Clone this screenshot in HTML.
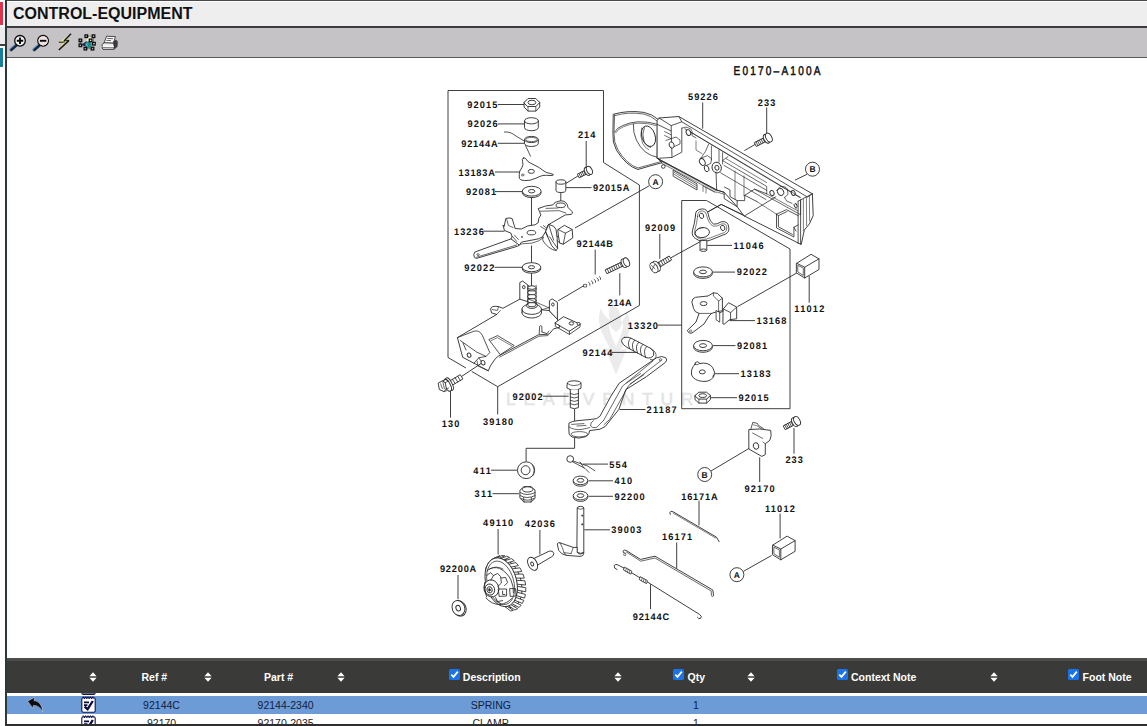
<!DOCTYPE html>
<html>
<head>
<meta charset="utf-8">
<title>CONTROL-EQUIPMENT</title>
<style>
html,body{margin:0;padding:0;background:#fff;}
body{width:1147px;height:726px;position:relative;overflow:hidden;font-family:"Liberation Sans",sans-serif;}
.abs{position:absolute;}
#topline{left:5px;top:0;width:1142px;height:1px;background:#4a4a4a;}
#vline{left:5px;top:0;width:2px;height:726px;background:#2e3838;}
#redblk{left:0;top:2px;width:3px;height:23px;background:#e0344a;}
#leftgray{left:0;top:27px;width:5px;height:17px;background:#ececec;}
#lefthl{left:0;top:44px;width:5px;height:2px;background:#3a4242;}
#tealblk{left:0;top:48px;width:3px;height:19px;background:#1a7f96;}
#hdr{left:7px;top:2px;width:1140px;height:24px;background:#eeeeee;}
#hdr span{position:absolute;left:6px;top:2px;font-size:16px;font-weight:bold;color:#111;white-space:nowrap;line-height:20px;}
#hdrline{left:7px;top:26px;width:1140px;height:2px;background:#3c3c3c;}
#tbar{left:7px;top:28px;width:1140px;height:29px;background:#c5c3c5;}
#tbarline{left:7px;top:57px;width:1140px;height:1px;background:#5a5a5a;}
#thead{left:7px;top:658px;width:1140px;height:35px;background:#3a3b39;}
#theadtop{left:7px;top:658px;width:1140px;height:3px;background:#4c4d4b;}
#rowsel{left:7px;top:696px;width:1140px;height:18px;background:#6c9bd6;}
#botline{left:5px;top:724px;width:1142px;height:2px;background:#2e2e2e;}
.th{position:absolute;top:670px;font-size:10.5px;font-weight:bold;color:#fff;white-space:nowrap;line-height:14px;}
.td{position:absolute;font-size:10.5px;color:#10213f;white-space:nowrap;line-height:14px;transform:translateX(-50%);}
.cb{position:absolute;top:669px;width:11px;height:11px;background:#1a73e8;border-radius:1.5px;}
.sort{position:absolute;top:672px;width:8px;height:10px;}
#dgm{left:0;top:0;}
#dgm text{font-family:"Liberation Sans",sans-serif;font-weight:bold;font-size:9.5px;fill:#111;letter-spacing:0.9px;text-rendering:geometricPrecision;}
</style>
</head>
<body>
<div class="abs" id="topline"></div>
<div class="abs" id="redblk"></div>
<div class="abs" id="leftgray"></div>
<div class="abs" id="lefthl"></div>
<div class="abs" id="tealblk"></div>
<div class="abs" id="hdr"><span>CONTROL-EQUIPMENT</span></div>
<div class="abs" id="hdrline"></div>
<div class="abs" id="tbar"></div>
<div class="abs" id="tbarline"></div>
<svg class="abs" style="left:0;top:0" width="140" height="60" viewBox="0 0 140 60"><g><path d="M15.8 45.2L10.8 49.6" stroke="#7fa0c8" stroke-width="3.6" stroke-linecap="round"/><path d="M16.2 45.6L11.4 49.9" stroke="#16263e" stroke-width="2.6" stroke-linecap="round"/><circle cx="20" cy="40.8" r="5.3" fill="#f4f4f4" stroke="#0a0a0a" stroke-width="1.3"/><path d="M16.8 40.8h6.4M20 37.6v6.4" stroke="#0a0a0a" stroke-width="1.9"/></g><g><path d="M38.9 45.2L33.900000000000006 49.6" stroke="#7fa0c8" stroke-width="3.6" stroke-linecap="round"/><path d="M39.300000000000004 45.6L34.5 49.9" stroke="#16263e" stroke-width="2.6" stroke-linecap="round"/><circle cx="43.1" cy="40.8" r="5.3" fill="#f4f4f4" stroke="#0a0a0a" stroke-width="1.3"/><circle cx="43.1" cy="40.8" r="4.6" fill="#efe2e2"/><path d="M39.9 40.8h6.4" stroke="#0a0a0a" stroke-width="1.9"/></g><path d="M70.4 34.2L58.6 42.2L63.6 42.3L58.4 50.2L68.4 41.2L64 40.8Z" fill="#ece58a"/><path d="M71 33.8L64 40.9" fill="none" stroke="#15150a" stroke-width="1.4"/><path d="M69 40.4L58.8 50" fill="none" stroke="#15150a" stroke-width="1.5"/><path d="M58.8 42.3L64.6 42" fill="none" stroke="#15150a" stroke-width="1.1"/><path d="M64 40.9L69 40.4" fill="none" stroke="#15150a" stroke-width="0.9"/><rect x="86.6" y="36.6" width="4.6" height="4.8" fill="#f2eec0"/><path d="M81 45L86.5 41L87.5 47Z" fill="#1c2a66"/><circle cx="88.4" cy="44.8" r="3.3" fill="#1f8a84"/><path d="M87 43.4a2 2 0 0 0 1 3" stroke="#8fd0c8" stroke-width="0.9" fill="none"/><rect x="85.0" y="34.9" width="2.6" height="2.6" fill="#e8e8e8" stroke="#0a0a0a" stroke-width="1.25"/><rect x="92.2" y="34.9" width="2.6" height="2.6" fill="#e8e8e8" stroke="#0a0a0a" stroke-width="1.25"/><rect x="79.1" y="39.1" width="2.6" height="2.6" fill="#e8e8e8" stroke="#0a0a0a" stroke-width="1.25"/><rect x="89.3" y="39.1" width="2.6" height="2.6" fill="#e8e8e8" stroke="#0a0a0a" stroke-width="1.25"/><rect x="79.1" y="44.0" width="2.6" height="2.6" fill="#e8e8e8" stroke="#0a0a0a" stroke-width="1.25"/><rect x="92.6" y="42.4" width="2.6" height="2.6" fill="#e8e8e8" stroke="#0a0a0a" stroke-width="1.25"/><rect x="84.1" y="47.3" width="2.6" height="2.6" fill="#e8e8e8" stroke="#0a0a0a" stroke-width="1.25"/><rect x="91.2" y="47.3" width="2.6" height="2.6" fill="#e8e8e8" stroke="#0a0a0a" stroke-width="1.25"/><path d="M86.3 36.2H93.5M80.4 40.4V45.3M85.4 48.6H92.5M93.5 37.5V42.5" stroke="#0a0a0a" stroke-width="0.7" stroke-dasharray="1 1"/><path d="M106.6 36.2L115.4 36.6L113.4 43.2L104 43Z" fill="#fafafa" stroke="#222" stroke-width="0.8"/><path d="M107.2 38.4L113 38.7M106.4 40.4L111 40.6" stroke="#444" stroke-width="0.8"/><path d="M113.4 41.6L116 39.6L117.8 41.4L117.6 46.6L114.4 49.6L113.4 45Z" fill="#3c3c3c"/><path d="M102.2 44.4L104.2 42.8L113.6 43.2L114 45.4L114 49.4L103 49.4L102.2 47.4Z" fill="#ededed" stroke="#222" stroke-width="0.8"/><path d="M102.6 46.2L113.8 46.4" stroke="#fff" stroke-width="1"/><path d="M102.6 47.6L113.8 47.8" stroke="#555" stroke-width="0.8"/></svg>
<svg class="abs" id="dgm" width="1147" height="726" viewBox="0 0 1147 726">
<g><text x="506" y="404.6" textLength="194.5" style="font-size:17.5px;font-weight:normal;fill:#e4e4e4;stroke:#e4e4e4;stroke-width:0.5px;letter-spacing:7px">LEADVENTUR</text><path d="M612 303 Q607 311 610 320 Q603 316 601 308 Q596 321 603 335 L611 350 L605 348 L616 375 L627 348 L621 350 L628 335 Q633 322 626 311 Q626 319 621 322 Q622 311 612 303 Z M609 322 Q608 330 616 346 Q624 330 623 322 Q620 330 616 332 Q612 330 609 322 Z" fill="#ebebeb" fill-rule="evenodd"/></g>
<text transform="translate(733.5 74.8) scale(0.8 1)" x="0" y="0" textLength="110.7" style="font-size:12.6px;font-weight:normal;stroke:#111;stroke-width:0.5px;letter-spacing:2px">E0170–A100A</text>
<text transform="translate(467.3 108.0) scale(0.97 1)" x="0" y="0" textLength="31.9">92015</text>
<text transform="translate(467.5 127.4) scale(0.97 1)" x="0" y="0" textLength="31.9">92026</text>
<text transform="translate(461.2 146.8) scale(0.97 1)" x="0" y="0" textLength="38.4">92144A</text>
<text transform="translate(458.5 175.6) scale(0.97 1)" x="0" y="0" textLength="38.4">13183A</text>
<text transform="translate(466 195.3) scale(0.97 1)" x="0" y="0" textLength="31.9">92081</text>
<text transform="translate(577.9 138.1) scale(0.97 1)" x="0" y="0" textLength="19.0">214</text>
<text transform="translate(593 191.1) scale(0.97 1)" x="0" y="0" textLength="38.4">92015A</text>
<text transform="translate(453.9 234.7) scale(0.97 1)" x="0" y="0" textLength="31.9">13236</text>
<text transform="translate(576.6 246.7) scale(0.97 1)" x="0" y="0" textLength="38.4">92144B</text>
<text transform="translate(464.2 270.7) scale(0.97 1)" x="0" y="0" textLength="31.9">92022</text>
<text transform="translate(607.7 305.9) scale(0.97 1)" x="0" y="0" textLength="25.5">214A</text>
<text transform="translate(582.4 355.9) scale(0.97 1)" x="0" y="0" textLength="31.9">92144</text>
<text transform="translate(512.6 399.7) scale(0.97 1)" x="0" y="0" textLength="31.9">92002</text>
<text transform="translate(483.1 424.5) scale(0.97 1)" x="0" y="0" textLength="31.9">39180</text>
<text transform="translate(441.8 427.1) scale(0.97 1)" x="0" y="0" textLength="19.0">130</text>
<text transform="translate(687.9 100.3) scale(0.97 1)" x="0" y="0" textLength="31.9">59226</text>
<text transform="translate(757.8 106.1) scale(0.97 1)" x="0" y="0" textLength="19.0">233</text>
<text transform="translate(645 231.4) scale(0.97 1)" x="0" y="0" textLength="31.9">92009</text>
<text transform="translate(733.5 248.9) scale(0.97 1)" x="0" y="0" textLength="31.9">11046</text>
<text transform="translate(736.7 275.2) scale(0.97 1)" x="0" y="0" textLength="31.9">92022</text>
<text transform="translate(794.3 312.4) scale(0.97 1)" x="0" y="0" textLength="31.9">11012</text>
<text transform="translate(756.4 324.1) scale(0.97 1)" x="0" y="0" textLength="31.9">13168</text>
<text transform="translate(627.7 328.6) scale(0.97 1)" x="0" y="0" textLength="31.9">13320</text>
<text transform="translate(737 349.1) scale(0.97 1)" x="0" y="0" textLength="31.9">92081</text>
<text transform="translate(740.6 377.2) scale(0.97 1)" x="0" y="0" textLength="31.9">13183</text>
<text transform="translate(738.5 401.2) scale(0.97 1)" x="0" y="0" textLength="31.9">92015</text>
<text transform="translate(646.6 413.0) scale(0.97 1)" x="0" y="0" textLength="31.9">21187</text>
<text transform="translate(785.4 463.1) scale(0.97 1)" x="0" y="0" textLength="19.0">233</text>
<text transform="translate(744.5 492.4) scale(0.97 1)" x="0" y="0" textLength="31.9">92170</text>
<text transform="translate(681.2 499.7) scale(0.97 1)" x="0" y="0" textLength="38.4">16171A</text>
<text transform="translate(764.9 512.0) scale(0.97 1)" x="0" y="0" textLength="31.9">11012</text>
<text transform="translate(473.2 473.7) scale(0.97 1)" x="0" y="0" textLength="19.0">411</text>
<text transform="translate(609.3 467.6) scale(0.97 1)" x="0" y="0" textLength="19.0">554</text>
<text transform="translate(614.6 484.1) scale(0.97 1)" x="0" y="0" textLength="19.0">410</text>
<text transform="translate(474.5 497.0) scale(0.97 1)" x="0" y="0" textLength="19.0">311</text>
<text transform="translate(614.6 499.8) scale(0.97 1)" x="0" y="0" textLength="31.9">92200</text>
<text transform="translate(483.1 526.0) scale(0.97 1)" x="0" y="0" textLength="31.9">49110</text>
<text transform="translate(524.8 527.1) scale(0.97 1)" x="0" y="0" textLength="31.9">42036</text>
<text transform="translate(611.2 533.3) scale(0.97 1)" x="0" y="0" textLength="31.9">39003</text>
<text transform="translate(662 539.9) scale(0.97 1)" x="0" y="0" textLength="31.9">16171</text>
<text transform="translate(439.9 572.1) scale(0.97 1)" x="0" y="0" textLength="38.4">92200A</text>
<text transform="translate(632.7 620.0) scale(0.97 1)" x="0" y="0" textLength="38.4">92144C</text>
<path d="M448 90.5 L603.5 90.5 L603.5 162.5 L639.4 185 L639.4 305.5 L497.7 386.7 M448 90.5 L448 357.5 L466 368 M471.7 371.4 L497.7 386.7 L497.7 414.5 M681.7 200.5 L706.5 200.5 L790 249 L790 408.7 L681.7 408.7 L681.7 200.5 M497.8 104.5 L524.5 104.5 M497.8 123.9 L524.5 123.9 M497.8 143.3 L537.5 143.3 M495 172 L520.3 172 M495 191.6 L522.5 191.6 M586.2 141 L586.2 167.5 M566 187.6 L591.5 187.6 M483.2 231.2 L504.5 231.2 M595.2 249.6 L595.2 274.5 M494.5 267.3 L522.3 267.3 M619.8 273.2 L619.8 295.4 M612 352.4 L636 352.4 M543 396.2 L568.6 396.2 M450.5 391 L450.5 417.7 M702.7 102.5 L702.7 128.6 M766.7 107.5 L766.7 133 M659.8 234 L659.8 258.8 M707.2 245.4 L732 245.4 M713 272.1 L735 272.1 M809.2 276 L809.2 302.7 M729.5 320.6 L755 320.6 M657.5 325.1 L681.7 325.1 M713 345.6 L735.5 345.6 M714.5 373.7 L739 373.7 M710.7 397.7 L737 397.7 M619.7 409.5 L645.5 409.5 M794 428 L794 453.7 M759.7 457.3 L759.7 482 M699 500.6 L699 525.4 M780.1 513.7 L780.1 538.5 M491 470.2 L517.5 470.2 M583 464.1 L608 464.1 M588.5 480.8 L613 480.8 M492.5 493.7 L519 493.7 M588.5 496.3 L613 496.3 M498.1 529 L498.1 554.5 M539.9 530 L539.9 554.5 M584.3 529.8 L610 529.8 M676.7 542.5 L676.7 568.6 M458 575 L458 599.2 M650.5 584.3 L650.5 609.2 M531.5 197 L531.5 229 M531.5 245.6 L531.5 262.6 M531.5 272 L531.5 288 M560.8 192 L560.8 202.4 M649.2 185.8 L575 228 M558.2 300.8 L584 285.6 M461.5 376.5 L481.5 363.2 M574.6 409 L574.6 421.4 M574.6 437.8 L574.6 448.3 L526.1 448.3 L526.1 461.5 M670.5 258 L700.5 241.5 M796.7 273 L737.6 306.6 M749.2 448.3 L711 471 M743.5 571.3 L771.5 555.5 M807 174.3 L795 180.1 M755 144.5 L744.4 150.6 M577.9 176 L565.8 183.5 M775.8 196.8 L744.7 215.8 L721.2 204.4 L707.6 212" fill="none" stroke="#2a2a2a" stroke-width="0.9"/>
<circle cx="655.6" cy="181.7" r="7" fill="#fff" stroke="#2a2a2a" stroke-width="0.9"/>
<text x="652.5" y="184.89999999999998" style="font-size:8.5px;letter-spacing:0">A</text>
<circle cx="812.5" cy="169.2" r="7" fill="#fff" stroke="#2a2a2a" stroke-width="0.9"/>
<text x="809.4" y="172.39999999999998" style="font-size:8.5px;letter-spacing:0">B</text>
<circle cx="704.7" cy="474.5" r="7" fill="#fff" stroke="#2a2a2a" stroke-width="0.9"/>
<text x="701.6" y="477.7" style="font-size:8.5px;letter-spacing:0">B</text>
<circle cx="736.9" cy="574.7" r="7" fill="#fff" stroke="#2a2a2a" stroke-width="0.9"/>
<text x="733.8" y="577.9000000000001" style="font-size:8.5px;letter-spacing:0">A</text>
<path d="M524.1 102.5 L524.1 107.1 L528.0 111.1 L535.8 111.1 L539.7 107.1 L539.7 102.5 Z" fill="#fff" stroke="#2a2a2a" stroke-width="0.9" stroke-linejoin="round" stroke-linecap="round" />
<path d="M524.1 102.5 L528.0 98.5 L535.8 98.5 L539.7 102.5 L535.8 106.5 L528.0 106.5 Z" fill="#fff" stroke="#2a2a2a" stroke-width="0.9" stroke-linejoin="round" stroke-linecap="round" />
<path d="M528.0 106.5V111.1M535.8 106.5V111.1" fill="none" stroke="#2a2a2a" stroke-width="0.7" stroke-linejoin="round" stroke-linecap="round" />
<ellipse cx="531.9" cy="102.5" rx="3.9" ry="2.2680000000000002" transform="rotate(0 531.9 102.5)" fill="#fff" stroke="#2a2a2a" stroke-width="0.9"/>
<path d="M524.5 120.8V127.6A6.9 3.1 0 0 0 538.3 127.6V120.8" fill="#fff" stroke="#2a2a2a" stroke-width="0.9" stroke-linejoin="round" stroke-linecap="round" />
<ellipse cx="531.4" cy="120.8" rx="6.9" ry="3.1" transform="rotate(0 531.4 120.8)" fill="#fff" stroke="#2a2a2a" stroke-width="0.9"/>
<path d="M504.4 132 C509 131.5 512 133 516 136 L525 141.5" fill="none" stroke="#2a2a2a" stroke-width="0.8" stroke-linejoin="round" stroke-linecap="round" />
<path d="M524.5 139.5V143.4A6.9 3.1 0 0 0 538.3 143.4V139.5" fill="#fff" stroke="#2a2a2a" stroke-width="0.9" stroke-linejoin="round" stroke-linecap="round" />
<ellipse cx="531.4" cy="139.5" rx="6.9" ry="3.1" transform="rotate(0 531.4 139.5)" fill="#fff" stroke="#2a2a2a" stroke-width="0.9"/>
<ellipse cx="531.4" cy="139.5" rx="5.6" ry="2.1" transform="rotate(0 531.4 139.5)" fill="none" stroke="#2a2a2a" stroke-width="0.7"/>
<path d="M525.6 145.6 L530.5 156.2" fill="none" stroke="#2a2a2a" stroke-width="0.8" stroke-linejoin="round" stroke-linecap="round" />
<path d="M523.7 157.9 Q525.4 157.6 525.9 158.9 Q527 161.4 530.3 163 L538.9 167.4 Q543 170.6 546.2 172.4 Q550 173.4 553.4 174.4 Q553.6 175.6 551 175.6 Q546 175 542.6 175.5 Q539 176.6 536 178.2 Q530 181 524.5 180.6 Q520 180.4 519.3 178.2 Q519 174 519.8 171 Q522.4 167.6 523 164.5 Q522.4 161 522.3 159.4 Q522.6 158 523.7 157.9 Z" fill="#fff" stroke="#2a2a2a" stroke-width="0.9" stroke-linejoin="round" stroke-linecap="round" />
<ellipse cx="531.3" cy="171.4" rx="3.1" ry="2.0" transform="rotate(0 531.3 171.4)" fill="#fff" stroke="#2a2a2a" stroke-width="0.9"/>
<ellipse cx="522.8" cy="175" rx="1.4" ry="0.9" transform="rotate(0 522.8 175)" fill="none" stroke="#2a2a2a" stroke-width="0.7"/>
<ellipse cx="531.7" cy="192.7" rx="9.4" ry="4.9" transform="rotate(0 531.7 192.7)" fill="#fff" stroke="#2a2a2a" stroke-width="0.9"/>
<ellipse cx="531.7" cy="191.2" rx="9.4" ry="4.9" transform="rotate(0 531.7 191.2)" fill="#fff" stroke="#2a2a2a" stroke-width="0.9"/>
<ellipse cx="531.7" cy="191.2" rx="3.2" ry="1.7" transform="rotate(0 531.7 191.2)" fill="#fff" stroke="#2a2a2a" stroke-width="0.9"/>
<path d="M585.2 170.2 L577.3 174.2 L579.1 177.8 L587.0 173.8 Z" fill="#fff" stroke="#2a2a2a" stroke-width="0.9" stroke-linejoin="round" stroke-linecap="round" />
<path d="M583.7 171.0L585.4 174.6M582.1 171.8L583.9 175.4M580.5 172.6L582.3 176.2M578.9 173.4L580.7 177.0" fill="none" stroke="#2a2a2a" stroke-width="0.8" stroke-linejoin="round" stroke-linecap="round" />
<ellipse cx="587.2826997932801" cy="171.45865010335993" rx="2.4200000000000004" ry="4.4" transform="rotate(153.4349488229219 587.2826997932801 171.45865010335993)" fill="#fff" stroke="#2a2a2a" stroke-width="0.9"/>
<ellipse cx="589.4472135955" cy="170.37639320225003" rx="2.64" ry="4.4" transform="rotate(153.4349488229219 589.4472135955 170.37639320225003)" fill="#fff" stroke="#2a2a2a" stroke-width="0.9"/>
<path d="M556.0 182V190.3A4.9 2.2 0 0 0 565.8 190.3V182" fill="#fff" stroke="#2a2a2a" stroke-width="0.9" stroke-linejoin="round" stroke-linecap="round" />
<ellipse cx="560.9" cy="182" rx="4.9" ry="2.2" transform="rotate(0 560.9 182)" fill="#fff" stroke="#2a2a2a" stroke-width="0.9"/>
<path d="M511.0 238.9 L474.9 252.0 L473.7 254.8 L474.6 257.6 L476.5 258.4 L517.3 246.3 L519.4 245.2 L521.0 241.0 Z" fill="#fff" stroke="#2a2a2a" stroke-width="0.9" stroke-linejoin="round" stroke-linecap="round" />
<path d="M476.6 257.2 L516.6 245" fill="none" stroke="#2a2a2a" stroke-width="0.7" stroke-linejoin="round" stroke-linecap="round" />
<ellipse cx="478.1" cy="254.6" rx="1.2" ry="0.9" transform="rotate(0 478.1 254.6)" fill="#fff" stroke="#2a2a2a" stroke-width="0.7"/>
<path d="M503.2 225.3 L504.2 226.4 L505.8 218.5 Q509 217.4 512.1 218.5 L514.2 225.3 L515.2 228.5 L521.5 229 L527.8 225.9 L535.1 224.8 L538.2 222.7 L538.8 218.5 L540.9 214.9 L538.2 208.6 L545.6 206 L552.9 204.9 Q554.4 201.6 561.3 200.8 Q567 201 568.1 207.6 L572.2 211.7 Q573 213.8 571.2 214.4 L565.4 214.9 L551.8 222.7 L547.7 225.3 L545.6 231.6 L542.4 236.9 L538.2 238.9 L521.5 242.1 L519.4 245.2 L511 238.9 L512.1 236.9 L511 233.2 L504.8 230.6 Z" fill="#fff" stroke="#2a2a2a" stroke-width="0.9" stroke-linejoin="round" stroke-linecap="round" />
<ellipse cx="560.7" cy="205.3" rx="4.7" ry="2.3" transform="rotate(0 560.7 205.3)" fill="#fff" stroke="#2a2a2a" stroke-width="0.9"/>
<ellipse cx="531.4" cy="232.7" rx="4.3" ry="2.2" transform="rotate(0 531.4 232.7)" fill="#fff" stroke="#2a2a2a" stroke-width="0.9"/>
<ellipse cx="522" cy="236.9" rx="0.7" ry="0.5" transform="rotate(0 522 236.9)" fill="#2a2a2a" stroke="#2a2a2a" stroke-width="0.5"/>
<path d="M540.3 211.2 L559.2 210.7 L566 213 M546 208.4 L558 208 M540.6 226.6 L545.4 229.4 M543.4 225.6 L546 227.6 M506.8 219.6 L508.4 225.4 L513.2 227.6 M512.4 236.2 L516.6 241.4 M514.6 235.2 L518.4 239.6" fill="none" stroke="#2a2a2a" stroke-width="0.7" stroke-linejoin="round" stroke-linecap="round" />
<path d="M520.6 244.2 L522.6 243.8 L532 243.1 L538.8 240.8 L543.6 237.4" fill="none" stroke="#2a2a2a" stroke-width="0.7" stroke-linejoin="round" stroke-linecap="round" />
<path d="M545.6 231.6 L548.7 224.3 L553.9 226.4 L556.0 229.5 L557.1 236.9 L557.6 248.4 L556.0 250.5 L552.0 246.0 Z" fill="#fff" stroke="#2a2a2a" stroke-width="0.9" stroke-linejoin="round" stroke-linecap="round" />
<path d="M542.9 236.9 Q541.6 240 544.5 243 Q548 247.6 552.6 249.6 L556 250.5 M549.7 236.9 Q553 242 557.6 248.4 M548.7 224.3 L551 232 L553.6 240 M545.6 231.6 L548 236.6" fill="none" stroke="#2a2a2a" stroke-width="0.8" stroke-linejoin="round" stroke-linecap="round" />
<path d="M558.1 229.5 L564.4 225.3 L572.2 229.5 L572.8 237.9 L563.3 244.2 L559.7 243.1 L558.6 236.9 Z" fill="#fff" stroke="#2a2a2a" stroke-width="0.9" stroke-linejoin="round" stroke-linecap="round" />
<path d="M558.1 229.5 L565.4 233.2 L572.2 229.5 M565.4 233.2 L563.3 244.2 M556.6 236 L558.6 236.9 M557.4 240.6 L559.7 243.1" fill="none" stroke="#2a2a2a" stroke-width="0.8" stroke-linejoin="round" stroke-linecap="round" />
<ellipse cx="531.5" cy="268.7" rx="9.3" ry="4.5" transform="rotate(0 531.5 268.7)" fill="#fff" stroke="#2a2a2a" stroke-width="0.9"/>
<ellipse cx="531.5" cy="267.2" rx="9.3" ry="4.5" transform="rotate(0 531.5 267.2)" fill="#fff" stroke="#2a2a2a" stroke-width="0.9"/>
<ellipse cx="531.5" cy="267.2" rx="3.1" ry="1.6" transform="rotate(0 531.5 267.2)" fill="#fff" stroke="#2a2a2a" stroke-width="0.9"/>
<path d="M584 284.4 h2.6 v2.6 h-2.6 Z" fill="#fff" stroke="#2a2a2a" stroke-width="0.7" stroke-linejoin="round" stroke-linecap="round" />
<path d="M588.6 282.2 q2.2 1 1.4 3 M591.4 280.8 q2.2 1 1.4 3 M594.2 279.4 q2.2 1 1.4 3 M597 278 q2.2 1 1.4 3 M599.4 276.6 q2 1 1.2 2.8" fill="none" stroke="#2a2a2a" stroke-width="0.8" stroke-linejoin="round" stroke-linecap="round" />
<path d="M622.0 261.9 L605.1 269.9 L606.9 273.7 L623.8 265.7 Z" fill="#fff" stroke="#2a2a2a" stroke-width="0.9" stroke-linejoin="round" stroke-linecap="round" />
<path d="M619.9 262.9L621.7 266.7M617.8 263.9L619.6 267.7M615.7 264.9L617.5 268.7M613.6 265.9L615.4 269.7M611.5 266.9L613.2 270.7M609.3 267.9L611.1 271.7M607.2 268.9L609.0 272.7" fill="none" stroke="#2a2a2a" stroke-width="0.8" stroke-linejoin="round" stroke-linecap="round" />
<ellipse cx="624.1537516484303" cy="263.26773672523774" rx="2.53" ry="4.6" transform="rotate(154.82647547546978 624.1537516484303 263.26773672523774)" fill="#fff" stroke="#2a2a2a" stroke-width="0.9"/>
<ellipse cx="626.4525118508749" cy="262.1873194300888" rx="2.76" ry="4.6" transform="rotate(154.82647547546978 626.4525118508749 262.1873194300888)" fill="#fff" stroke="#2a2a2a" stroke-width="0.9"/>
<path d="M519.8 299.2 L502.9 308.3 L498.6 306.6 Q491 305.4 490.6 309 L491.5 312.9 L496.8 314.4 L457.4 337.6 L462.7 357.3 L473.9 363.2 L488.3 370.8 L490.6 365.5 L495.2 358.8 L498.9 355.8 L538.5 334.8 L549.1 334.1 L553.6 328.8 L559.7 327.3 L557.4 318.9 L549.4 310.6 L541.5 309.8" fill="none" stroke="#2a2a2a" stroke-width="0.9" stroke-linejoin="round" stroke-linecap="round" />
<path d="M496.8 314.4 L500.4 310.6 M498.6 306.6 L497.4 310.4 L492.4 309.6" fill="none" stroke="#2a2a2a" stroke-width="0.7" stroke-linejoin="round" stroke-linecap="round" />
<path d="M499.6 357.2 L539 336.2 L548 335.6" fill="none" stroke="#2a2a2a" stroke-width="0.7" stroke-linejoin="round" stroke-linecap="round" />
<path d="M457.4 337.6 L474 331.2 Q479.4 329.8 482.3 335.2 L489.8 352.6 L486 356.4 L478.8 357.8 L473.9 363.2 M460.4 340.6 L476.6 352 L486 356.4 M463 343 L466 350" fill="none" stroke="#2a2a2a" stroke-width="0.8" stroke-linejoin="round" stroke-linecap="round" />
<ellipse cx="469.1" cy="355.2" rx="1.8" ry="2.2" transform="rotate(-25 469.1 355.2)" fill="#fff" stroke="#2a2a2a" stroke-width="0.9"/>
<ellipse cx="483" cy="362.7" rx="1.9" ry="2.3" transform="rotate(-25 483 362.7)" fill="#fff" stroke="#2a2a2a" stroke-width="0.9"/>
<path d="M478.8 357.8 L481 361 M488.3 370.8 L478 366 L477 361" fill="none" stroke="#2a2a2a" stroke-width="0.7" stroke-linejoin="round" stroke-linecap="round" />
<path d="M489.2 339.4 L497.6 335.6 L514.2 345.5 L500.6 354.5 Z" fill="none" stroke="#2a2a2a" stroke-width="0.8" stroke-linejoin="round" stroke-linecap="round" />
<path d="M490.8 340.8 L497.4 337.6 L511.6 345.8" fill="none" stroke="#2a2a2a" stroke-width="0.6" stroke-linejoin="round" stroke-linecap="round" />
<path d="M519.8 298.8 L519.8 282.6 L522.6 281.0 L528.6 285.6 L528.6 301.5 Z" fill="#fff" stroke="#2a2a2a" stroke-width="0.9" stroke-linejoin="round" stroke-linecap="round" />
<ellipse cx="523.8" cy="287.1" rx="1.3" ry="1.6" transform="rotate(0 523.8 287.1)" fill="#fff" stroke="#2a2a2a" stroke-width="0.9"/>
<ellipse cx="531.7" cy="312.6" rx="9.8" ry="5.4" transform="rotate(0 531.7 312.6)" fill="#fff" stroke="#2a2a2a" stroke-width="0.9"/>
<ellipse cx="531.7" cy="309.2" rx="9.8" ry="5.2" transform="rotate(0 531.7 309.2)" fill="#fff" stroke="#2a2a2a" stroke-width="0.9"/>
<path d="M522 309.2 V312.6 M541.4 309.2 V312.6" fill="none" stroke="#2a2a2a" stroke-width="0.7" stroke-linejoin="round" stroke-linecap="round" />
<ellipse cx="531.9" cy="305.4" rx="5.6" ry="3.0" transform="rotate(0 531.9 305.4)" fill="#fff" stroke="#2a2a2a" stroke-width="0.9"/>
<ellipse cx="531.9" cy="304.6" rx="4.2" ry="2.1" transform="rotate(0 531.9 304.6)" fill="#fff" stroke="#2a2a2a" stroke-width="0.9"/>
<path d="M527.7 304.6 v-3.4 M536.1 304.6 v-3.4" fill="none" stroke="#2a2a2a" stroke-width="0.8" stroke-linejoin="round" stroke-linecap="round" />
<ellipse cx="531.9" cy="300.6" rx="4.2" ry="2.1" transform="rotate(0 531.9 300.6)" fill="#fff" stroke="#2a2a2a" stroke-width="0.9"/>
<path d="M527.7 300.6 v-3.4 M536.1 300.6 v-3.4" fill="none" stroke="#2a2a2a" stroke-width="0.8" stroke-linejoin="round" stroke-linecap="round" />
<ellipse cx="531.9" cy="296.6" rx="4.2" ry="2.1" transform="rotate(0 531.9 296.6)" fill="#fff" stroke="#2a2a2a" stroke-width="0.9"/>
<path d="M527.7 296.6 v-3.4 M536.1 296.6 v-3.4" fill="none" stroke="#2a2a2a" stroke-width="0.8" stroke-linejoin="round" stroke-linecap="round" />
<ellipse cx="531.9" cy="292.6" rx="4.2" ry="2.1" transform="rotate(0 531.9 292.6)" fill="#fff" stroke="#2a2a2a" stroke-width="0.9"/>
<path d="M527.7 292.6 v-3.4 M536.1 292.6 v-3.4" fill="none" stroke="#2a2a2a" stroke-width="0.8" stroke-linejoin="round" stroke-linecap="round" />
<ellipse cx="531.9" cy="288.8" rx="4.2" ry="2.1" transform="rotate(0 531.9 288.8)" fill="#fff" stroke="#2a2a2a" stroke-width="0.9"/>
<path d="M527.7 288.8 v-3.4 M536.1 288.8 v-3.4" fill="none" stroke="#2a2a2a" stroke-width="0.8" stroke-linejoin="round" stroke-linecap="round" />
<ellipse cx="531.9" cy="287.6" rx="3.9" ry="1.8" transform="rotate(0 531.9 287.6)" fill="#fff" stroke="#2a2a2a" stroke-width="0.9"/>
<path d="M549.4 310.6 L549.4 300.8 L552.1 298.8 L557.4 302.3 L557.4 318.9 Z" fill="#fff" stroke="#2a2a2a" stroke-width="0.9" stroke-linejoin="round" stroke-linecap="round" />
<ellipse cx="552.9" cy="304.5" rx="1.3" ry="1.6" transform="rotate(0 552.9 304.5)" fill="#fff" stroke="#2a2a2a" stroke-width="0.9"/>
<path d="M541.5 309.8 L549.1 307.6 M528.6 299 L549.4 308" fill="none" stroke="#2a2a2a" stroke-width="0.7" stroke-linejoin="round" stroke-linecap="round" />
<path d="M555.2 322.7 L563.5 316.7 L580.2 324.2 L569.5 331.1 Z" fill="#fff" stroke="#2a2a2a" stroke-width="0.9" stroke-linejoin="round" stroke-linecap="round" />
<path d="M555.2 322.7 L555.4 326.4 L569.4 334.4 L569.5 331.1 M569.4 334.4 L580 327 L580.2 324.2" fill="none" stroke="#2a2a2a" stroke-width="0.8" stroke-linejoin="round" stroke-linecap="round" />
<ellipse cx="571.4" cy="323.4" rx="2.3" ry="1.6" transform="rotate(0 571.4 323.4)" fill="#fff" stroke="#2a2a2a" stroke-width="0.9"/>
<ellipse cx="578.6" cy="323.8" rx="1.5" ry="1.3" transform="rotate(0 578.6 323.8)" fill="#fff" stroke="#2a2a2a" stroke-width="0.9"/>
<path d="M539.2 334 L539.6 326.4 Q540.6 325 541.8 326.2 L542 332 M542 332 L547 333.6 L549 331" fill="none" stroke="#2a2a2a" stroke-width="0.8" stroke-linejoin="round" stroke-linecap="round" />
<path d="M452.5 385.1 L462.9 378.9 L460.3 374.7 L449.9 380.8 Z" fill="#fff" stroke="#2a2a2a" stroke-width="0.9" stroke-linejoin="round" stroke-linecap="round" />
<path d="M455.1 383.6L452.5 379.3M457.7 382.0L455.1 377.7M460.3 380.5L457.7 376.2" fill="none" stroke="#2a2a2a" stroke-width="0.8" stroke-linejoin="round" stroke-linecap="round" />
<ellipse cx="450.53124063677967" cy="383.3863692078666" rx="0.05500000000000001" ry="0.1" transform="rotate(-30.754394079558526 450.53124063677967 383.3863692078666)" fill="#fff" stroke="#2a2a2a" stroke-width="0.9"/>
<ellipse cx="449.0703164013418" cy="384.2556794967222" rx="0.06" ry="0.1" transform="rotate(-30.754394079558526 449.0703164013418 384.2556794967222)" fill="#fff" stroke="#2a2a2a" stroke-width="0.9"/>
<ellipse cx="449.2" cy="384.2" rx="2.9" ry="6.9" transform="rotate(-27 449.2 384.2)" fill="#fff" stroke="#2a2a2a" stroke-width="0.9"/>
<ellipse cx="447.6" cy="385.2" rx="2.7" ry="6.5" transform="rotate(-27 447.6 385.2)" fill="#fff" stroke="#2a2a2a" stroke-width="0.9"/>
<path d="M438.5 382.9 L442.2 381.0 L445.3 382.6 L446.3 388.8 L444.1 391.6 L439.7 389.7 Z" fill="#fff" stroke="#2a2a2a" stroke-width="0.9" stroke-linejoin="round" stroke-linecap="round" />
<path d="M442.2 381 L445.4 379.6 L448 380.8 M445.3 382.6 L448.2 381.2 M446.3 388.8 L448.6 388 M444.1 391.6 L446.6 390.8 M440.6 383.8 L442.4 388.6 M443 382.6 L444.4 388.8" fill="none" stroke="#2a2a2a" stroke-width="0.7" stroke-linejoin="round" stroke-linecap="round" />
<path d="M613.6 114.2 Q628 110 643.9 112.4 Q652 114 658.3 119.5 L657.3 158.2 L662.1 162.7 Q650 165.8 637.9 169.5 Q626.5 166 616.7 150.6 Q612 142 612.9 133.9 Z" fill="#fff" stroke="#2a2a2a" stroke-width="0.9" stroke-linejoin="round" stroke-linecap="round" />
<path d="M614.6 114.8 L614 133" fill="none" stroke="#2a2a2a" stroke-width="0.7" stroke-linejoin="round" stroke-linecap="round" />
<path d="M614.4 132.4 Q617 127.4 622.7 125.6 Q630 122.2 637.9 121.8 Q648 121.4 656.8 124.1" fill="none" stroke="#2a2a2a" stroke-width="0.8" stroke-linejoin="round" stroke-linecap="round" />
<path d="M633.3 124.1 Q633 133 636.4 140 Q640 147.6 645.5 152.1 Q651 156 657.6 157.4" fill="none" stroke="#2a2a2a" stroke-width="0.8" stroke-linejoin="round" stroke-linecap="round" />
<ellipse cx="648.5" cy="136.2" rx="6.6" ry="10.6" transform="rotate(-18 648.5 136.2)" fill="#fff" stroke="#2a2a2a" stroke-width="0.9"/>
<path d="M644.4 127.6 Q641.4 134 644 141.4 Q646.4 146.6 650.6 147.4" fill="none" stroke="#2a2a2a" stroke-width="0.7" stroke-linejoin="round" stroke-linecap="round" />
<ellipse cx="663.3" cy="166.5" rx="1.8" ry="1.8" transform="rotate(0 663.3 166.5)" fill="#fff" stroke="#2a2a2a" stroke-width="0.9"/>
<path d="M614.8 115.6 Q628 111.6 643.6 114 Q651 115.6 656.6 120.6 M614 134 Q613.6 142 618 150 Q627 164.6 638 168 Q650 164.6 661 161.6" fill="none" stroke="#2a2a2a" stroke-width="0.7" stroke-linejoin="round" stroke-linecap="round" />
<path d="M615.6 133 Q618 128.6 623.4 126.8 Q630 123.6 638 123.2 Q648 122.8 656.4 125.6" fill="none" stroke="#2a2a2a" stroke-width="0.6" stroke-linejoin="round" stroke-linecap="round" />
<path d="M641.6 128 Q639.6 136 642.6 143.4 Q645 148 648.6 149.6" fill="none" stroke="#2a2a2a" stroke-width="0.6" stroke-linejoin="round" stroke-linecap="round" />
<path d="M657.3 120.3 L659.1 118.0 L678.8 116.5 L812.4 193.8 L813.2 215.6 L809.4 223.9 L804.3 230.1 L801.2 244.5 L743.9 215.8 L737.1 206.7 L724.2 192.3 L716.7 190.0 L657.3 158.4 Z" fill="#fff" stroke="#2a2a2a" stroke-width="0.9" stroke-linejoin="round" stroke-linecap="round" />
<path d="M659.1 118 L671.2 125.6 L681.8 121.8 L678.8 116.5 M681.8 121.8 L807.4 197 L812.4 193.8 M671.2 125.6 L671.2 131 L657.3 124.4" fill="none" stroke="#2a2a2a" stroke-width="0.8" stroke-linejoin="round" stroke-linecap="round" />
<path d="M685 128.8 L800 197.6 M671.2 131 L672 157.4 L657.3 158.4 M672 157.4 L681.8 152.2 L681.8 128" fill="none" stroke="#2a2a2a" stroke-width="0.8" stroke-linejoin="round" stroke-linecap="round" />
<path d="M664.6 131.6 L671 134.8 M664.6 135.4 L671 138.6 M666 140.4 L676 137 L680 140 L680 144 L672 147.6" fill="none" stroke="#2a2a2a" stroke-width="0.7" stroke-linejoin="round" stroke-linecap="round" />
<ellipse cx="671.6" cy="145" rx="2.4" ry="3.2" transform="rotate(-20 671.6 145)" fill="#fff" stroke="#2a2a2a" stroke-width="0.9"/>
<ellipse cx="688.4" cy="132.6" rx="2.2" ry="3.0" transform="rotate(-25 688.4 132.6)" fill="#fff" stroke="#2a2a2a" stroke-width="0.9"/>
<path d="M682 128 Q686 125.6 690.6 128.8 Q693 131 692 135.6 L696 138" fill="none" stroke="#2a2a2a" stroke-width="0.7" stroke-linejoin="round" stroke-linecap="round" />
<path d="M708.6 144.4 Q706 152 701 158 M711.4 146 L711.4 160 M719 150 L719 162 M722.6 152.6 L722.6 164" fill="none" stroke="#2a2a2a" stroke-width="0.7" stroke-linejoin="round" stroke-linecap="round" />
<ellipse cx="702.3" cy="162" rx="2.6" ry="3.6" transform="rotate(-30 702.3 162)" fill="#fff" stroke="#2a2a2a" stroke-width="0.9"/>
<path d="M700 158.6 L707.4 155.6 L711.6 158.6 L710.8 163.4 L704.6 166.2" fill="none" stroke="#2a2a2a" stroke-width="0.7" stroke-linejoin="round" stroke-linecap="round" />
<ellipse cx="706.6" cy="168.6" rx="2.2" ry="3.2" transform="rotate(-20 706.6 168.6)" fill="#fff" stroke="#2a2a2a" stroke-width="0.9"/>
<ellipse cx="716.7" cy="167.6" rx="4.6" ry="5.4" transform="rotate(-15 716.7 167.6)" fill="#fff" stroke="#2a2a2a" stroke-width="0.9"/>
<ellipse cx="716.9" cy="167.8" rx="2.0" ry="2.5" transform="rotate(-15 716.9 167.8)" fill="#fff" stroke="#2a2a2a" stroke-width="0.9"/>
<path d="M722.6 160.6 L766.7 186.4 L766.7 193.8 M724 165.4 L766.7 190.4 M728 156.6 L723 160.2 M720.6 172.8 L766 199.6" fill="none" stroke="#2a2a2a" stroke-width="0.7" stroke-linejoin="round" stroke-linecap="round" />
<path d="M657.3 158.4 L716.7 190 M716 172 L716.7 190 L724.2 192.3 L724.2 198.6 L737.1 206.7 L737.1 200.6 L744.7 200.6 L744.7 195.3 L754.5 189.2 L766.7 193.8 M744.7 195.3 L757 201.6 M737.1 200.6 L730 196.6 L730 190 L724.4 187" fill="none" stroke="#2a2a2a" stroke-width="0.8" stroke-linejoin="round" stroke-linecap="round" />
<path d="M754.5 189.2 L800.4 214.6" fill="none" stroke="#2a2a2a" stroke-width="0.7" stroke-linejoin="round" stroke-linecap="round" />
<path d="M673.5 170.3 L697.0 183.9 L697.0 190.0 L673.5 176.4 Z" fill="#fff" stroke="#2a2a2a" stroke-width="0.8" stroke-linejoin="round" stroke-linecap="round" />
<path d="M674 172.2 L696.6 185.6 M674 174.2 L696.6 187.8 M703 186 L703 191.4 M706 187.6 L706 193 M703 186 L714.6 192.2" fill="none" stroke="#2a2a2a" stroke-width="0.6" stroke-linejoin="round" stroke-linecap="round" />
<path d="M798.1 201.2 L798.1 243.5 M800.6 200 L800.6 244 M812.4 193.8 L798.1 201.2" fill="none" stroke="#2a2a2a" stroke-width="0.8" stroke-linejoin="round" stroke-linecap="round" />
<path d="M776.5 214.2 L786.4 209.7 L798.5 215.8 M776.5 214.2 L776.5 227.9 L793.9 237 L793.9 227.2 L798.1 225 M778.4 215.6 L778.4 226.8 L792.4 234.4 M793.9 227.2 L796 231 M776.5 214.2 L778.4 215.6 L787 211.6" fill="none" stroke="#2a2a2a" stroke-width="0.8" stroke-linejoin="round" stroke-linecap="round" />
<ellipse cx="772" cy="193" rx="2.0" ry="2.6" transform="rotate(-25 772 193)" fill="#fff" stroke="#2a2a2a" stroke-width="0.9"/>
<ellipse cx="780.6" cy="192" rx="3.0" ry="3.6" transform="rotate(-20 780.6 192)" fill="#fff" stroke="#2a2a2a" stroke-width="0.9"/>
<ellipse cx="793.2" cy="193" rx="1.9" ry="2.5" transform="rotate(-25 793.2 193)" fill="#fff" stroke="#2a2a2a" stroke-width="0.9"/>
<path d="M776.4 190.6 L780 186.8 Q785 185.6 787.4 189 L788 194.4 L784.6 197.4 M784.6 197.4 L786.6 201 L792 203.4 M796 203.6 L796 209" fill="none" stroke="#2a2a2a" stroke-width="0.7" stroke-linejoin="round" stroke-linecap="round" />
<ellipse cx="795.6" cy="205.6" rx="1.4" ry="2.0" transform="rotate(-20 795.6 205.6)" fill="#fff" stroke="#2a2a2a" stroke-width="0.9"/>
<path d="M690 131.6 L800.6 197.4 M696 141 L696 150 L702 153.6 M726 158.6 L766.7 182.6 M744 176 L744 196 M735 171 L735 199.6 M766.7 193.8 L798 211 M757 201.6 L776.5 214.2 M800.6 214.6 L800.6 200" fill="none" stroke="#2a2a2a" stroke-width="0.6" stroke-linejoin="round" stroke-linecap="round" />
<path d="M803.4 199 L803.4 231 M806.4 197.4 L806.6 225.6 M809.4 196 L809.6 221" fill="none" stroke="#2a2a2a" stroke-width="0.6" stroke-linejoin="round" stroke-linecap="round" />
<path d="M660 160.6 L716 190.6 M662 163.4 L716.4 192.6 M717 192 L724 194.2" fill="none" stroke="#2a2a2a" stroke-width="0.6" stroke-linejoin="round" stroke-linecap="round" />
<path d="M764.4 137.5 L754.3 142.7 L756.3 146.5 L766.3 141.2 Z" fill="#fff" stroke="#2a2a2a" stroke-width="0.9" stroke-linejoin="round" stroke-linecap="round" />
<path d="M762.7 138.4L764.7 142.1M761.1 139.2L763.0 143.0M759.4 140.1L761.3 143.8M757.7 141.0L759.6 144.7M756.0 141.9L757.9 145.6" fill="none" stroke="#2a2a2a" stroke-width="0.8" stroke-linejoin="round" stroke-linecap="round" />
<ellipse cx="766.5893993124746" cy="138.7398537919979" rx="2.64" ry="4.8" transform="rotate(152.56689737317657 766.5893993124746 138.7398537919979)" fill="#fff" stroke="#2a2a2a" stroke-width="0.9"/>
<ellipse cx="768.843774678315" cy="137.5696436784319" rx="2.88" ry="4.8" transform="rotate(152.56689737317657 768.843774678315 137.5696436784319)" fill="#fff" stroke="#2a2a2a" stroke-width="0.9"/>
<path d="M659.0 267.4 L671.6 260.0 L669.2 256.0 L656.7 263.4 Z" fill="#fff" stroke="#2a2a2a" stroke-width="0.9" stroke-linejoin="round" stroke-linecap="round" />
<path d="M661.1 266.1L658.8 262.2M663.2 264.9L660.9 260.9M665.3 263.7L663.0 259.7M667.4 262.4L665.1 258.5M669.5 261.2L667.1 257.2" fill="none" stroke="#2a2a2a" stroke-width="0.8" stroke-linejoin="round" stroke-linecap="round" />
<ellipse cx="656.4693067518538" cy="266.1842822832859" rx="3.08" ry="5.6" transform="rotate(-30.434235753443353 656.4693067518538 266.1842822832859)" fill="#fff" stroke="#2a2a2a" stroke-width="0.9"/>
<ellipse cx="653.9688944266971" cy="267.6532745243154" rx="3.36" ry="5.6" transform="rotate(-30.434235753443353 653.9688944266971 267.6532745243154)" fill="#fff" stroke="#2a2a2a" stroke-width="0.9"/>
<path d="M651.6 265.6 l3.4 3.2 M654.8 264.4 l-2.8 5.4" fill="none" stroke="#2a2a2a" stroke-width="0.7" stroke-linejoin="round" stroke-linecap="round" />
<path d="M695.5 215.8 Q694.6 209.4 702.3 208.9 Q707.4 209 708.3 214.2 Q709.6 221.6 713.6 224.1 Q717 224.6 721.2 221.8 Q728.4 220.4 728.8 227.9 Q729.4 232 725.8 233.9 L710.6 240 Q702 243.4 695.5 238.5 Q691.4 236 692.4 230.9 Q694.8 223 695.5 215.8 Z" fill="#fff" stroke="#2a2a2a" stroke-width="0.9" stroke-linejoin="round" stroke-linecap="round" />
<path d="M697.6 216.4 Q697 211.2 702.3 210.9 Q706.2 211.2 706.6 215.2 Q708.4 223.6 713.2 226.2 Q717.6 226.6 721.4 224 Q726.6 222.8 726.8 228 Q727 231 724.6 232.4 L710 238 Q702 241 697 237.4 Q693.8 235 694.6 231.2 Q697 223 697.6 216.4Z" fill="none" stroke="#2a2a2a" stroke-width="0.6" stroke-linejoin="round" stroke-linecap="round" />
<ellipse cx="701.5" cy="215.8" rx="2.1" ry="2.7" transform="rotate(-20 701.5 215.8)" fill="#fff" stroke="#2a2a2a" stroke-width="0.9"/>
<ellipse cx="722.7" cy="227.9" rx="2.1" ry="2.7" transform="rotate(-20 722.7 227.9)" fill="#fff" stroke="#2a2a2a" stroke-width="0.9"/>
<ellipse cx="702.3" cy="232.6" rx="7.2" ry="5.0" transform="rotate(-8 702.3 232.6)" fill="#fff" stroke="#2a2a2a" stroke-width="0.9"/>
<path d="M696 231 Q698 227.6 703 227.6" fill="none" stroke="#2a2a2a" stroke-width="0.6" stroke-linejoin="round" stroke-linecap="round" />
<path d="M700.0 241.2 L700.0 250.2 L706.8 250.2 L706.8 240.6 Z" fill="#fff" stroke="#2a2a2a" stroke-width="0.9" stroke-linejoin="round" stroke-linecap="round" />
<ellipse cx="703.4" cy="250.2" rx="3.4" ry="1.2" transform="rotate(0 703.4 250.2)" fill="#fff" stroke="#2a2a2a" stroke-width="0.9"/>
<ellipse cx="703" cy="273.4" rx="9.4" ry="5.0" transform="rotate(0 703 273.4)" fill="#fff" stroke="#2a2a2a" stroke-width="0.9"/>
<ellipse cx="703" cy="271.9" rx="9.4" ry="5.0" transform="rotate(0 703 271.9)" fill="#fff" stroke="#2a2a2a" stroke-width="0.9"/>
<ellipse cx="703" cy="271.9" rx="3.5" ry="1.8" transform="rotate(0 703 271.9)" fill="#fff" stroke="#2a2a2a" stroke-width="0.9"/>
<path d="M691.9 301.8 Q692 298.4 695.5 297.3 L708 296 L713.4 292.8 L717.4 293.4 L722.4 298.2 L722.4 310.7 L716 312 L711.6 313.4 L708.9 316.1 L704 324 L691.9 333.1 Q688.4 333.8 687.4 330.4 L696 322 L699.1 313.4 Q694.4 312.4 693.7 308.9 Z" fill="#fff" stroke="#2a2a2a" stroke-width="0.9" stroke-linejoin="round" stroke-linecap="round" />
<ellipse cx="703.6" cy="303.6" rx="3.4" ry="2.0" transform="rotate(0 703.6 303.6)" fill="#fff" stroke="#2a2a2a" stroke-width="0.9"/>
<ellipse cx="690.6" cy="331" rx="1.3" ry="0.9" transform="rotate(0 690.6 331)" fill="#fff" stroke="#2a2a2a" stroke-width="0.6"/>
<path d="M699.1 313.4 L711.6 313.4 M713.4 292.8 L713.4 296 L718.6 301 L722.4 298.2 M718.6 301 L718.6 311.4" fill="none" stroke="#2a2a2a" stroke-width="0.7" stroke-linejoin="round" stroke-linecap="round" />
<path d="M716.1 310.7 L716.1 319.7 L719.7 322.2 L719.7 313.0 Z" fill="#fff" stroke="#2a2a2a" stroke-width="0.8" stroke-linejoin="round" stroke-linecap="round" />
<path d="M723.3 308.9 L728.6 302.7 L736.7 307.1 L736.7 318.8 L729.5 319.7 L724.2 324.2 L723.3 324.0 Z" fill="#fff" stroke="#2a2a2a" stroke-width="0.9" stroke-linejoin="round" stroke-linecap="round" />
<path d="M723.3 308.9 L730.6 312.6 L736.7 307.1 M730.6 312.6 L730.6 319.6 M719.7 313 L723.3 311" fill="none" stroke="#2a2a2a" stroke-width="0.8" stroke-linejoin="round" stroke-linecap="round" />
<ellipse cx="703" cy="347.1" rx="9.4" ry="5.2" transform="rotate(0 703 347.1)" fill="#fff" stroke="#2a2a2a" stroke-width="0.9"/>
<ellipse cx="703" cy="345.6" rx="9.4" ry="5.2" transform="rotate(0 703 345.6)" fill="#fff" stroke="#2a2a2a" stroke-width="0.9"/>
<ellipse cx="703" cy="345.6" rx="3.5" ry="1.9" transform="rotate(0 703 345.6)" fill="#fff" stroke="#2a2a2a" stroke-width="0.9"/>
<path d="M695 364.2 Q694.6 361.6 697.4 361.8 Q699 362 699.6 363.6 Q708 361.6 712.6 367.4 Q716 372 713.6 377 Q710 382 702.6 381.4 Q694 380.6 691.6 375 Q690.4 369 695 364.2 Z" fill="#fff" stroke="#2a2a2a" stroke-width="0.9" stroke-linejoin="round" stroke-linecap="round" />
<path d="M695 364.2 Q696.6 366 699.6 363.6 M712.4 376.4 L714.4 374.8" fill="none" stroke="#2a2a2a" stroke-width="0.7" stroke-linejoin="round" stroke-linecap="round" />
<ellipse cx="702.3" cy="371.9" rx="3.0" ry="2.0" transform="rotate(0 702.3 371.9)" fill="#fff" stroke="#2a2a2a" stroke-width="0.9"/>
<path d="M695.0 395.6 L695.0 399.6 L698.9 403.1 L706.6 403.1 L710.4 399.6 L710.4 395.6 Z" fill="#fff" stroke="#2a2a2a" stroke-width="0.9" stroke-linejoin="round" stroke-linecap="round" />
<path d="M695.0 395.6 L698.9 392.2 L706.6 392.2 L710.4 395.6 L706.6 399.1 L698.9 399.1 Z" fill="#fff" stroke="#2a2a2a" stroke-width="0.9" stroke-linejoin="round" stroke-linecap="round" />
<path d="M698.9 399.1V403.1M706.6 399.1V403.1" fill="none" stroke="#2a2a2a" stroke-width="0.7" stroke-linejoin="round" stroke-linecap="round" />
<ellipse cx="702.7" cy="395.6" rx="3.85" ry="1.9319999999999997" transform="rotate(0 702.7 395.6)" fill="#fff" stroke="#2a2a2a" stroke-width="0.9"/>
<path d="M796.7 263.3 L811.0 254.3 L819.0 258.8 L819.0 269.5 L804.7 278.0 L796.7 273.1 Z" fill="#fff" stroke="#2a2a2a" stroke-width="0.9" stroke-linejoin="round" stroke-linecap="round" />
<path d="M796.7 263.3 L804.7 267.2 L804.7 278.0 M804.7 267.2 L819.0 258.8" fill="none" stroke="#2a2a2a" stroke-width="0.9" stroke-linejoin="round" stroke-linecap="round" />
<path d="M798.1 265.5 L803.3 268.1 L803.3 275.5 L798.1 272.1 Z" fill="none" stroke="#2a2a2a" stroke-width="0.7" stroke-linejoin="round" stroke-linecap="round" />
<path d="M772.8 545.1 L787.1 536.1 L795.1 540.6 L795.1 551.3 L780.8 559.8 L772.8 554.9 Z" fill="#fff" stroke="#2a2a2a" stroke-width="0.9" stroke-linejoin="round" stroke-linecap="round" />
<path d="M772.8 545.1 L780.8 549.0 L780.8 559.8000000000001 M780.8 549.0 L795.0999999999999 540.6" fill="none" stroke="#2a2a2a" stroke-width="0.9" stroke-linejoin="round" stroke-linecap="round" />
<path d="M774.2 547.3 L779.4 549.9 L779.4 557.3 L774.2 553.9 Z" fill="none" stroke="#2a2a2a" stroke-width="0.7" stroke-linejoin="round" stroke-linecap="round" />
<path d="M751 428.6 L752.8 422.4 L757.3 423.3 L758.4 425.4 L763.5 428.6 L763 431" fill="#fff" stroke="#2a2a2a" stroke-width="0.8" stroke-linejoin="round" stroke-linecap="round" />
<path d="M753.6 424.8 L757 425.8 L762 429.2" fill="none" stroke="#2a2a2a" stroke-width="0.6" stroke-linejoin="round" stroke-linecap="round" />
<path d="M749.2 429.5 Q760 428 770.7 430.4 Q772 436 769.8 440.3 L765.3 443.8 L765.3 454.6 L761.8 456.4 L749.2 449.2 Z" fill="#fff" stroke="#2a2a2a" stroke-width="0.9" stroke-linejoin="round" stroke-linecap="round" />
<path d="M752.6 433 L762.6 438.4 M765.3 443.8 L763 442" fill="none" stroke="#2a2a2a" stroke-width="0.7" stroke-linejoin="round" stroke-linecap="round" />
<ellipse cx="756" cy="446" rx="2.7" ry="3.3" transform="rotate(-15 756 446)" fill="#fff" stroke="#2a2a2a" stroke-width="0.9"/>
<path d="M792.6 420.9 L783.2 425.9 L785.2 429.7 L794.6 424.7 Z" fill="#fff" stroke="#2a2a2a" stroke-width="0.9" stroke-linejoin="round" stroke-linecap="round" />
<path d="M791.0 421.8L793.0 425.5M789.5 422.6L791.5 426.3M787.9 423.4L789.9 427.2M786.3 424.3L788.3 428.0M784.8 425.1L786.8 428.8" fill="none" stroke="#2a2a2a" stroke-width="0.8" stroke-linejoin="round" stroke-linecap="round" />
<ellipse cx="794.7991966114784" cy="422.15849212614864" rx="2.64" ry="4.8" transform="rotate(151.9754994679296 794.7991966114784 422.15849212614864)" fill="#fff" stroke="#2a2a2a" stroke-width="0.9"/>
<ellipse cx="797.0413733795397" cy="420.9650754592773" rx="2.88" ry="4.8" transform="rotate(151.9754994679296 797.0413733795397 420.9650754592773)" fill="#fff" stroke="#2a2a2a" stroke-width="0.9"/>
<path d="M775.8 196.8 L744.7 215.8 L721.2 204.4 L707.6 212" fill="none" stroke="#2a2a2a" stroke-width="0.8" stroke-linejoin="round" stroke-linecap="round" />
<path d="M624.4 337.4 Q621 338.6 621.8 342 Q623 345 627 347.4 L646 357.6 Q651 359 653.6 355.4 Q655 351.6 651 348.6 L632 338.6 Q628 336.4 624.4 337.4 Z" fill="#fff" stroke="#2a2a2a" stroke-width="0.9" stroke-linejoin="round" stroke-linecap="round" />
<path d="M630.6 338.2 Q626.6 342 629.6 348.6 M634.6 340.2 Q630.6 344 633.6 350.8 M638.6 342.4 Q634.6 346.2 637.6 353 M642.6 344.6 Q638.6 348.4 641.6 355.2 M646.6 346.6 Q642.8 350.4 645.6 357.2" fill="none" stroke="#2a2a2a" stroke-width="0.8" stroke-linejoin="round" stroke-linecap="round" />
<path d="M651 348.6 Q657 352 656 357 Q654.6 360.4 650.4 359.6" fill="none" stroke="#2a2a2a" stroke-width="0.7" stroke-linejoin="round" stroke-linecap="round" />
<path d="M656.8 357.7 Q662 355.4 665.6 357.6 Q668 360 665.4 362.4 L646.4 376.7 L625.8 389.6 L618.9 409.4 L605.1 426.6 L599.9 429.2 L589.6 430.6 Q590 434 586 436.6 Q579 439.4 572 437 Q568 435 568.9 431 L568.9 423.2 Q572 421 578 420.6 L591.3 419.4 L596.5 418.6 L599.9 416.3 L611 396 L618.9 383.6 Z" fill="#fff" stroke="#2a2a2a" stroke-width="0.9" stroke-linejoin="round" stroke-linecap="round" />
<path d="M653 361 L622.6 386 L603.6 420.4 M661 360.6 L628.6 385.6 L609.6 419.6 L604 424.6 M640.6 373.6 L626.6 383 M644 374.6 L630 384" fill="none" stroke="#2a2a2a" stroke-width="0.7" stroke-linejoin="round" stroke-linecap="round" />
<ellipse cx="660.6" cy="359.8" rx="1.3" ry="1.0" transform="rotate(0 660.6 359.8)" fill="#fff" stroke="#2a2a2a" stroke-width="0.7"/>
<path d="M593.4 420.6 Q590 422.6 590.6 426 Q592 428.4 596.6 427.4 L603.6 420.4" fill="none" stroke="#2a2a2a" stroke-width="0.7" stroke-linejoin="round" stroke-linecap="round" />
<path d="M568.9 427 Q574 430.4 582 429.4 L589.6 427.6 M571.6 424.4 L584 423.6 M577 426 L586 425.4" fill="none" stroke="#2a2a2a" stroke-width="0.7" stroke-linejoin="round" stroke-linecap="round" />
<ellipse cx="579.4" cy="434.2" rx="8.4" ry="2.6" transform="rotate(0 579.4 434.2)" fill="none" stroke="#2a2a2a" stroke-width="0.7"/>
<path d="M567.2 383.4 Q567 381 574 380.8 Q581 381 581 383.4 L581 388.2 Q578 390 574 390 Q569.6 390 567.2 388.2 Z" fill="#fff" stroke="#2a2a2a" stroke-width="0.9" stroke-linejoin="round" stroke-linecap="round" />
<path d="M567.2 383.4 Q570 385.6 574 385.6 Q578.6 385.6 581 383.4" fill="none" stroke="#2a2a2a" stroke-width="0.7" stroke-linejoin="round" stroke-linecap="round" />
<path d="M570.3 389.6 L570.3 407.6 Q574.4 409.8 578.4 407.6 L578.4 389.6" fill="#fff" stroke="#2a2a2a" stroke-width="0.9" stroke-linejoin="round" stroke-linecap="round" />
<path d="M570.3 393.6 Q574.4 395.8 578.4 393.6 M570.3 397 Q574.4 399.2 578.4 397 M570.3 400.4 Q574.4 402.6 578.4 400.4 M570.3 403.8 Q574.4 406 578.4 403.8" fill="none" stroke="#2a2a2a" stroke-width="0.8" stroke-linejoin="round" stroke-linecap="round" />
<ellipse cx="526.1" cy="470.2" rx="8.6" ry="8.4" transform="rotate(0 526.1 470.2)" fill="#fff" stroke="#2a2a2a" stroke-width="0.9"/>
<ellipse cx="525.6" cy="470.2" rx="4.4" ry="4.5" transform="rotate(0 525.6 470.2)" fill="#fff" stroke="#2a2a2a" stroke-width="0.9"/>
<path d="M532.6 464.8 Q535.6 469.6 533 475.6" fill="none" stroke="#2a2a2a" stroke-width="0.6" stroke-linejoin="round" stroke-linecap="round" />
<path d="M520.2 490 L524 486.6 L531 486.6 L535 490 L535 498.4 L531 502 L524 502 L520.2 498.4 Z" fill="#fff" stroke="#2a2a2a" stroke-width="0.9" stroke-linejoin="round" stroke-linecap="round" />
<ellipse cx="527.6" cy="489.4" rx="5.4" ry="2.6" transform="rotate(0 527.6 489.4)" fill="#fff" stroke="#2a2a2a" stroke-width="0.9"/>
<path d="M520.2 492.6 Q527 496.6 535 492.6 M520.2 495.6 Q527 499.6 535 495.6 M521.6 498.6 Q527 502 533.6 498.6 M524 502 L523.6 497.6 M531 502 L531.4 497.6" fill="none" stroke="#2a2a2a" stroke-width="0.8" stroke-linejoin="round" stroke-linecap="round" />
<path d="M533.6 558.6 L549.6 551 Q553.6 550.6 553.8 553.6 Q553.6 556 551.6 556.8 L536 566" fill="#fff" stroke="#2a2a2a" stroke-width="0.9" stroke-linejoin="round" stroke-linecap="round" />
<ellipse cx="532.6" cy="563.8" rx="4.4" ry="7.0" transform="rotate(-28 532.6 563.8)" fill="#fff" stroke="#2a2a2a" stroke-width="0.9"/>
<ellipse cx="532.2" cy="564" rx="1.4" ry="2.0" transform="rotate(-28 532.2 564)" fill="#fff" stroke="#2a2a2a" stroke-width="0.9"/>
<ellipse cx="459.6" cy="608.4" rx="6.4" ry="7.9" transform="rotate(-22 459.6 608.4)" fill="#fff" stroke="#2a2a2a" stroke-width="0.9"/>
<ellipse cx="458.4" cy="608" rx="6.2" ry="7.7" transform="rotate(-22 458.4 608)" fill="#fff" stroke="#2a2a2a" stroke-width="0.9"/>
<ellipse cx="458.2" cy="608.2" rx="2.2" ry="2.9" transform="rotate(-22 458.2 608.2)" fill="#fff" stroke="#2a2a2a" stroke-width="0.9"/>
<ellipse cx="505.8" cy="583.2" rx="15.4" ry="25.0" transform="rotate(-15 505.8 583.2)" fill="#fff" stroke="#2a2a2a" stroke-width="0.9"/>
<path d="M485.9 569.5 L488.1 569.0 L489.2 565.5 L486.8 566.4 Z" fill="#fff" stroke="#2a2a2a" stroke-width="0.85" stroke-linejoin="round" stroke-linecap="round" />
<path d="M487.5 564.8 L490.2 563.5 L492.0 560.8 L489.1 562.3 Z" fill="#fff" stroke="#2a2a2a" stroke-width="0.85" stroke-linejoin="round" stroke-linecap="round" />
<path d="M490.1 561.1 L493.3 559.3 L495.7 557.5 L492.0 559.5 Z" fill="#fff" stroke="#2a2a2a" stroke-width="0.85" stroke-linejoin="round" stroke-linecap="round" />
<path d="M493.3 558.8 L497.3 556.6 L500.0 555.8 L495.6 558.1 Z" fill="#fff" stroke="#2a2a2a" stroke-width="0.85" stroke-linejoin="round" stroke-linecap="round" />
<path d="M497.0 557.9 L501.9 555.5 L504.8 555.8 L499.5 558.2 Z" fill="#fff" stroke="#2a2a2a" stroke-width="0.85" stroke-linejoin="round" stroke-linecap="round" />
<path d="M501.0 558.6 L506.7 556.2 L509.6 557.5 L503.5 559.8 Z" fill="#fff" stroke="#2a2a2a" stroke-width="0.85" stroke-linejoin="round" stroke-linecap="round" />
<path d="M505.0 560.7 L511.5 558.6 L514.3 560.8 L507.4 562.8 Z" fill="#fff" stroke="#2a2a2a" stroke-width="0.85" stroke-linejoin="round" stroke-linecap="round" />
<path d="M508.7 564.2 L516.0 562.6 L518.4 565.6 L510.9 567.1 Z" fill="#fff" stroke="#2a2a2a" stroke-width="0.85" stroke-linejoin="round" stroke-linecap="round" />
<path d="M512.0 568.9 L519.9 567.8 L521.8 571.5 L513.7 572.3 Z" fill="#fff" stroke="#2a2a2a" stroke-width="0.85" stroke-linejoin="round" stroke-linecap="round" />
<path d="M514.6 574.3 L522.9 574.0 L524.3 578.1 L515.8 578.1 Z" fill="#fff" stroke="#2a2a2a" stroke-width="0.85" stroke-linejoin="round" stroke-linecap="round" />
<path d="M516.4 580.3 L524.9 580.8 L525.6 585.0 L517.0 584.2 Z" fill="#fff" stroke="#2a2a2a" stroke-width="0.85" stroke-linejoin="round" stroke-linecap="round" />
<path d="M517.2 586.4 L525.8 587.7 L525.7 591.8 L517.2 590.1 Z" fill="#fff" stroke="#2a2a2a" stroke-width="0.85" stroke-linejoin="round" stroke-linecap="round" />
<path d="M517.0 592.2 L525.4 594.4 L524.6 598.1 L516.3 595.6 Z" fill="#fff" stroke="#2a2a2a" stroke-width="0.85" stroke-linejoin="round" stroke-linecap="round" />
<path d="M515.8 597.4 L523.8 600.3 L522.3 603.4 L514.6 600.2 Z" fill="#fff" stroke="#2a2a2a" stroke-width="0.85" stroke-linejoin="round" stroke-linecap="round" />
<path d="M513.7 601.6 L521.1 605.2 L519.1 607.5 L511.9 603.7 Z" fill="#fff" stroke="#2a2a2a" stroke-width="0.85" stroke-linejoin="round" stroke-linecap="round" />
<path d="M510.8 604.6 L517.6 608.7 L515.0 610.0 L508.6 605.8 Z" fill="#fff" stroke="#2a2a2a" stroke-width="0.85" stroke-linejoin="round" stroke-linecap="round" />
<path d="M507.3 606.2 L513.3 610.5 L510.4 610.9 L504.9 606.5 Z" fill="#fff" stroke="#2a2a2a" stroke-width="0.85" stroke-linejoin="round" stroke-linecap="round" />
<ellipse cx="501.2" cy="582.2" rx="15.4" ry="24.9" transform="rotate(-15 501.2 582.2)" fill="#fff" stroke="#2a2a2a" stroke-width="0.9"/>
<ellipse cx="500.59999999999997" cy="582.8000000000001" rx="13.2" ry="22.2" transform="rotate(-15 500.59999999999997 582.8000000000001)" fill="none" stroke="#2a2a2a" stroke-width="0.7"/>
<ellipse cx="491.4" cy="588.4" rx="7.4" ry="8.6" transform="rotate(-15 491.4 588.4)" fill="#fff" stroke="#2a2a2a" stroke-width="0.9"/>
<ellipse cx="489.8" cy="589.6" rx="4.8" ry="5.6" transform="rotate(-15 489.8 589.6)" fill="#fff" stroke="#2a2a2a" stroke-width="0.9"/>
<ellipse cx="489.6" cy="589.8" rx="2.6" ry="3.1" transform="rotate(-15 489.6 589.8)" fill="#fff" stroke="#2a2a2a" stroke-width="0.9"/>
<ellipse cx="489.5" cy="589.9" rx="1.1" ry="1.4" transform="rotate(-15 489.5 589.9)" fill="#2a2a2a" stroke="#2a2a2a" stroke-width="0.4"/>
<path d="M487 570.6 Q493 566 499.6 568.4 Q507 572 511 580 Q514 587 513.4 593 M486.6 575.6 L490.6 572.6 L493.4 575.6 L491 580 M493.4 575.6 L497.6 573.4 L500.6 576.6 L501.4 583 L497.6 586.6 M501.4 578 L505.6 577.4 L507.6 582.6 L504.6 585.6 M498.6 589 L506.6 589 L506.6 596 L499.6 596.4 Z M502.6 591 L502.6 594.6 L505 594.4 M510 588.6 L515.6 588.6 L516 596 L510.6 596.4 Z M486 598 Q492 604.6 500 604.6 Q507 603.6 511.6 598.6 M495.6 597.6 L497.6 601.6 L502.6 600.6 M484.6 582.6 Q483.6 590 486.6 597" fill="none" stroke="#2a2a2a" stroke-width="0.85" stroke-linejoin="round" stroke-linecap="round" />
<path d="M489.6 569 Q496 565 503 569 M496 600.6 L500.6 603.6" fill="none" stroke="#2a2a2a" stroke-width="0.7" stroke-linejoin="round" stroke-linecap="round" />
<ellipse cx="570.2" cy="459" rx="3.4" ry="3.3" transform="rotate(0 570.2 459)" fill="#fff" stroke="#2a2a2a" stroke-width="0.9"/>
<path d="M573 461 L587.6 466 L594.9 470.7 M572.6 461.8 L585 468.4 L589 472.4 M580 462 L583.6 467.4" fill="none" stroke="#2a2a2a" stroke-width="0.8" stroke-linejoin="round" stroke-linecap="round" />
<ellipse cx="580.5" cy="481.9" rx="7.3" ry="4.3" transform="rotate(0 580.5 481.9)" fill="#fff" stroke="#2a2a2a" stroke-width="0.9"/>
<ellipse cx="580.5" cy="480.4" rx="7.3" ry="4.3" transform="rotate(0 580.5 480.4)" fill="#fff" stroke="#2a2a2a" stroke-width="0.9"/>
<ellipse cx="580.5" cy="480.4" rx="3.3" ry="1.9" transform="rotate(0 580.5 480.4)" fill="#fff" stroke="#2a2a2a" stroke-width="0.9"/>
<ellipse cx="580.5" cy="497.1" rx="7.3" ry="4.3" transform="rotate(0 580.5 497.1)" fill="#fff" stroke="#2a2a2a" stroke-width="0.9"/>
<ellipse cx="580.5" cy="495.6" rx="7.3" ry="4.3" transform="rotate(0 580.5 495.6)" fill="#fff" stroke="#2a2a2a" stroke-width="0.9"/>
<ellipse cx="580.5" cy="495.6" rx="3.3" ry="1.9" transform="rotate(0 580.5 495.6)" fill="#fff" stroke="#2a2a2a" stroke-width="0.9"/>
<path d="M577.2 508 Q577 506.4 580.5 506.4 Q583.8 506.4 583.8 508 L583.8 552.4 Q581 554.4 577.2 552.4 Z" fill="#fff" stroke="#2a2a2a" stroke-width="0.9" stroke-linejoin="round" stroke-linecap="round" />
<path d="M577.2 508.4 Q580.5 510.4 583.8 508.4" fill="none" stroke="#2a2a2a" stroke-width="0.7" stroke-linejoin="round" stroke-linecap="round" />
<ellipse cx="582.2" cy="515.6" rx="0.6" ry="0.8" transform="rotate(0 582.2 515.6)" fill="#2a2a2a" stroke="#2a2a2a" stroke-width="0.5"/>
<ellipse cx="582.2" cy="524.4" rx="0.6" ry="0.8" transform="rotate(0 582.2 524.4)" fill="#2a2a2a" stroke="#2a2a2a" stroke-width="0.5"/>
<path d="M557.4 543.6 Q558 542.2 560 542.8 L573.3 547.4 L577.2 547.4 L577.2 552.4 Q580 555.6 583.8 552.4 Q584 556 580 556.4 L566.6 555.4 Q561 554.6 558.9 550.7 Z" fill="#fff" stroke="#2a2a2a" stroke-width="0.9" stroke-linejoin="round" stroke-linecap="round" />
<path d="M560 542.8 Q562.6 547 564 552.6 Q565 554.4 566.6 555.4 M573.3 547.4 L571 553.6 M564 552.6 L571 553.6" fill="none" stroke="#2a2a2a" stroke-width="0.7" stroke-linejoin="round" stroke-linecap="round" />
<path d="M670.2 514.4 Q669 512.4 671 511.2 L672.8 511.6 L716.5 537.2 L719.1 541.7" fill="none" stroke="#2a2a2a" stroke-width="0.9" stroke-linejoin="round" stroke-linecap="round" />
<path d="M673 513 L715.6 538" fill="none" stroke="#2a2a2a" stroke-width="0.6" stroke-linejoin="round" stroke-linecap="round" />
<path d="M625.6 553.4 Q622.6 553.2 623 551.2 Q624 549.4 626 550.4 L640.6 559.4 L655 556.2 L712.8 590 L713.6 595.6 Q713 597 711.6 596" fill="none" stroke="#2a2a2a" stroke-width="0.9" stroke-linejoin="round" stroke-linecap="round" />
<path d="M626.4 552 L640.8 561.2 L655 558 L711.2 591 L711.4 595" fill="none" stroke="#2a2a2a" stroke-width="0.7" stroke-linejoin="round" stroke-linecap="round" />
<ellipse cx="624.8" cy="554.6" rx="1.2" ry="1.0" transform="rotate(0 624.8 554.6)" fill="#fff" stroke="#2a2a2a" stroke-width="0.6"/>
<path d="M617 569.6 Q613.6 568.6 614.2 565.6 Q615.6 563.4 618 565 L624.9 568.6 M631.4 572.6 L640.6 578.2 M647.1 581.8 L699.5 614.4 Q702.6 616.6 700.6 618.4 Q698.6 619.4 697.4 617.4" fill="none" stroke="#2a2a2a" stroke-width="0.9" stroke-linejoin="round" stroke-linecap="round" />
<path d="M624.6 567.2 L631.8 571.2 L631.0 574.2 L623.8 570.2 Z" fill="#fff" stroke="#2a2a2a" stroke-width="0.8" stroke-linejoin="round" stroke-linecap="round" />
<path d="M626.4 568.2 l-0.8 3 M628.2 569.2 l-0.8 3 M630 570.2 l-0.8 3" fill="none" stroke="#2a2a2a" stroke-width="0.6" stroke-linejoin="round" stroke-linecap="round" />
<path d="M640.4 576.8 L647.4 580.6 L646.6 583.6 L639.6 579.8 Z" fill="#fff" stroke="#2a2a2a" stroke-width="0.8" stroke-linejoin="round" stroke-linecap="round" />
<path d="M642.2 577.8 l-0.8 3 M644 578.8 l-0.8 3 M645.8 579.8 l-0.8 3" fill="none" stroke="#2a2a2a" stroke-width="0.6" stroke-linejoin="round" stroke-linecap="round" />
</svg>
<div class="abs" id="thead"></div>
<div class="abs" id="theadtop"></div>
<div class="abs" id="rowsel"></div>
<svg class="sort" style="left:89.2px;" viewBox="0 0 8 10"><path d="M4 0.2L7.6 4.2H0.4Z M4 9.8L7.6 5.8H0.4Z" fill="#fff"/></svg>
<svg class="sort" style="left:204.3px;" viewBox="0 0 8 10"><path d="M4 0.2L7.6 4.2H0.4Z M4 9.8L7.6 5.8H0.4Z" fill="#fff"/></svg>
<svg class="sort" style="left:337.2px;" viewBox="0 0 8 10"><path d="M4 0.2L7.6 4.2H0.4Z M4 9.8L7.6 5.8H0.4Z" fill="#fff"/></svg>
<svg class="sort" style="left:614.4px;" viewBox="0 0 8 10"><path d="M4 0.2L7.6 4.2H0.4Z M4 9.8L7.6 5.8H0.4Z" fill="#fff"/></svg>
<svg class="sort" style="left:747.0px;" viewBox="0 0 8 10"><path d="M4 0.2L7.6 4.2H0.4Z M4 9.8L7.6 5.8H0.4Z" fill="#fff"/></svg>
<svg class="sort" style="left:989.5px;" viewBox="0 0 8 10"><path d="M4 0.2L7.6 4.2H0.4Z M4 9.8L7.6 5.8H0.4Z" fill="#fff"/></svg>
<div class="th" style="left:141.5px;">Ref #</div>
<div class="th" style="left:264px;">Part #</div>
<div class="cb" style="left:448.5px;"><svg width="11" height="11" viewBox="0 0 11 11" style="position:absolute;left:0;top:0"><path d="M2.3 5.6L4.5 7.9L8.8 2.6" fill="none" stroke="#fff" stroke-width="1.7"/></svg></div>
<div class="th" style="left:462.8px;">Description</div>
<div class="cb" style="left:673px;"><svg width="11" height="11" viewBox="0 0 11 11" style="position:absolute;left:0;top:0"><path d="M2.3 5.6L4.5 7.9L8.8 2.6" fill="none" stroke="#fff" stroke-width="1.7"/></svg></div>
<div class="th" style="left:687.5px;">Qty</div>
<div class="cb" style="left:836.6px;"><svg width="11" height="11" viewBox="0 0 11 11" style="position:absolute;left:0;top:0"><path d="M2.3 5.6L4.5 7.9L8.8 2.6" fill="none" stroke="#fff" stroke-width="1.7"/></svg></div>
<div class="th" style="left:851px;">Context Note</div>
<div class="cb" style="left:1068px;"><svg width="11" height="11" viewBox="0 0 11 11" style="position:absolute;left:0;top:0"><path d="M2.3 5.6L4.5 7.9L8.8 2.6" fill="none" stroke="#fff" stroke-width="1.7"/></svg></div>
<div class="th" style="left:1082.6px;">Foot Note</div>
<div class="abs" style="left:7px;top:693px;width:1140px;height:3px;overflow:hidden;"><svg class="abs" style="left:74px;top:-15.4px" width="15" height="17" viewBox="0 0 15 17"><rect x="0.8" y="1.8" width="13.4" height="14.4" rx="1.5" fill="#fff" stroke="#10104a" stroke-width="1.1"/><path d="M1.5 16.2h12" stroke="#15153a" stroke-width="1.4"/></svg></div>
<svg class="abs" style="left:26px;top:696px" width="20" height="18" viewBox="0 0 20 18">
<path d="M1.6 5.2L8.6 1.2L8 4.6C13 5 16.4 9.5 16.6 16C14.6 11.6 11.6 9.4 7.4 9.4L6.8 12.2Z" fill="#0c0c14" stroke="#dfe8f6" stroke-width="0.7" stroke-opacity="0.7"/>
</svg>
<svg class="abs" style="left:81px;top:696px" width="15" height="17" viewBox="0 0 15 17">
<rect x="0.8" y="1.8" width="13.4" height="14.4" rx="1.5" fill="#fff" stroke="#10104a" stroke-width="1.1"/>
<path d="M1.6 1.2h12" stroke="#10104a" stroke-width="1.3" stroke-dasharray="1.2 1.2"/><path d="M2.8 2.4h10" stroke="#10104a" stroke-width="1.1" stroke-dasharray="1.2 1.2"/><path d="M3 6.4h5M3 9.2h3.4" stroke="#0c0c40" stroke-width="1.8"/><path d="M3.6 10.6L6.6 13.2L11.8 5" fill="none" stroke="#0c0c40" stroke-width="2.3"/>
</svg>
<div class="abs" style="left:7px;top:714px;width:1140px;height:10px;overflow:hidden;">
<svg class="abs" style="left:74px;top:0.5px" width="15" height="17" viewBox="0 0 15 17"><rect x="0.8" y="1.8" width="13.4" height="14.4" rx="1.5" fill="#fff" stroke="#10104a" stroke-width="1.1"/><path d="M1.6 1.2h12" stroke="#10104a" stroke-width="1.3" stroke-dasharray="1.2 1.2"/><path d="M2.8 2.4h10" stroke="#10104a" stroke-width="1.1" stroke-dasharray="1.2 1.2"/><path d="M3 6.4h5M3 9.2h3.4" stroke="#0c0c40" stroke-width="1.8"/><path d="M3.6 10.6L6.6 13.2L11.8 5" fill="none" stroke="#0c0c40" stroke-width="2.3"/></svg>
<div class="td"  style="left:154.6px;top:2px;color:#1d1d1d">92170</div>
<div class="td" style="left:278.6px;top:2px;color:#1d1d1d">92170-2035</div>
<div class="td" style="left:483.6px;top:2px;color:#1d1d1d">CLAMP</div>
<div class="td" style="left:688.8px;top:2px;color:#1d1d1d">1</div>
</div>
<div class="td" style="left:161.5px;top:698px;">92144C</div>
<div class="td" style="left:285.6px;top:698px;">92144-2340</div>
<div class="td" style="left:490.9px;top:698px;">SPRING</div>
<div class="td" style="left:695.8px;top:698px;">1</div>
<div class="abs" id="vline"></div>
<div class="abs" id="botline"></div>
</body>
</html>
